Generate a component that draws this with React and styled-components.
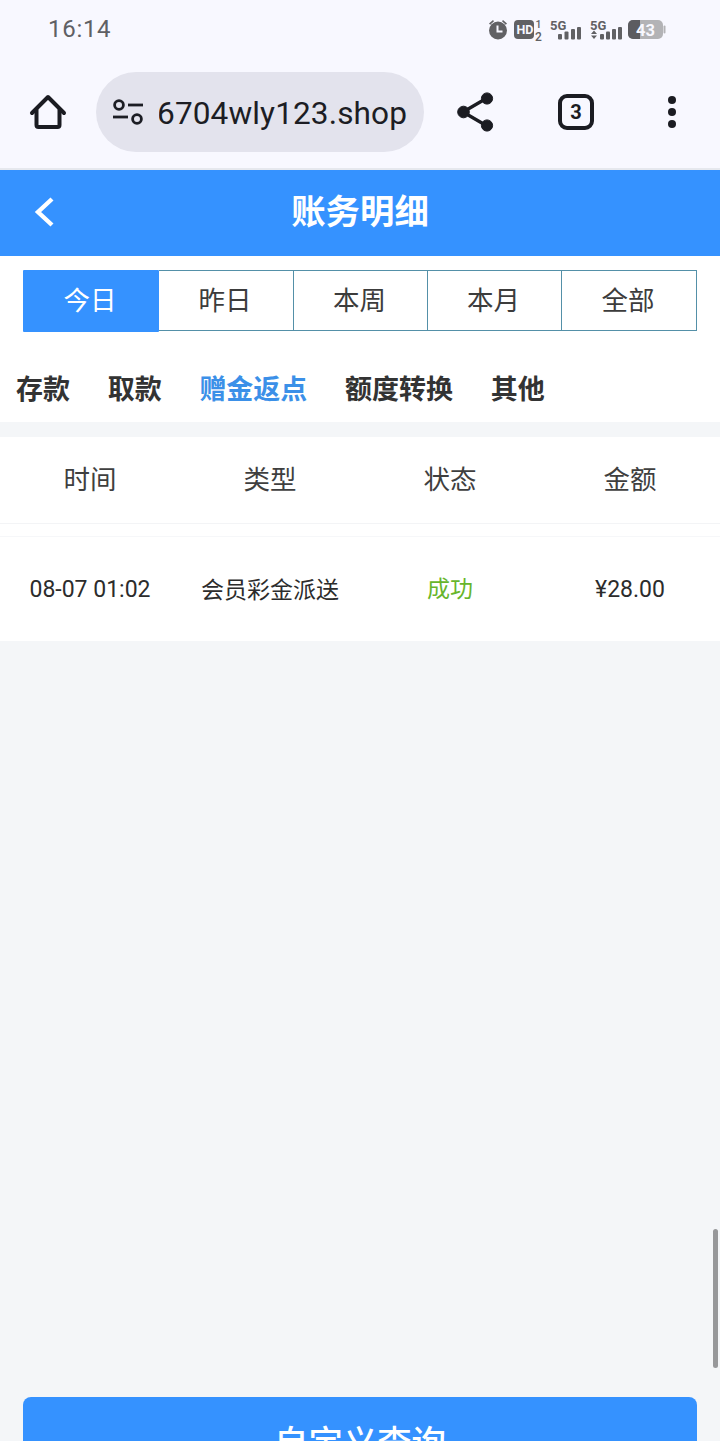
import React from 'react';
import styled, { createGlobalStyle } from 'styled-components';

const Global = createGlobalStyle`
    html, body {
        margin: 0;
        padding: 0;
        height: 100%;
        overflow: hidden;
        background: #f4f6f8;
    }
    * {
        box-sizing: border-box;
    }
`;

const cjk = `Roboto, "Noto Sans CJK SC", sans-serif`;

const Page = styled.div`
    position: relative;
    width: 720px;
    height: 1441px;
    overflow: hidden;
    font-family: ${cjk};
    background: #f4f6f8;
`;

const StatusBar = styled.div`
    height: 57px;
    background: #f8f8ff;
    display: flex;
    align-items: center;
    justify-content: space-between;
    padding: 0 54px 0 48px;
`;
const Clock = styled.span`
    font-size: 24px;
    letter-spacing: 0.7px;
    color: #5f6064;
`;
const StatusIcons = styled.div`
    display: flex;
    align-items: center;
    margin-top: 2px;
`;

const BrowserBar = styled.div`
    height: 113px;
    background: #f8f8ff;
    border-bottom: 2px solid #e6e8ee;
    display: flex;
    align-items: flex-start;
    padding: 15px 0 0 28px;
`;
const IconSlot = styled.div`
    flex: none;
    width: ${(p) => p.$w}px;
    height: 80px;
    margin-left: ${(p) => p.$ml || 0}px;
    display: flex;
    align-items: center;
    justify-content: center;
`;
const UrlPill = styled.div`
    flex: none;
    width: 328px;
    height: 80px;
    margin-left: 28px;
    padding: 0 17px 0 16px;
    border-radius: 40px;
    background: #e3e3ed;
    display: flex;
    align-items: center;
`;
const UrlClip = styled.div`
    flex: 1;
    margin-left: 15px;
    padding-top: 2px;
    overflow: hidden;
    display: flex;
    justify-content: flex-end;
    white-space: nowrap;
    font-size: 31.6px;
    letter-spacing: 0.1px;
    color: #1c1d24;
`;

const Header = styled.header`
    position: relative;
    height: 86px;
    padding-bottom: 8px;
    background: #3592ff;
    display: flex;
    align-items: center;
    justify-content: center;
    color: #fff;
    font-size: 34.4px;
    font-weight: 700;
`;
const BackButton = styled.div`
    position: absolute;
    left: 33px;
    top: 26px;
    display: flex;
`;

const TabsPanel = styled.div`
    background: #fff;
    padding: 14px 23px 0;
`;
const Tabs = styled.div`
    display: grid;
    grid-template-columns: 136px 135px 134px 134px 135px;
    height: 61px;
`;
const Tab = styled.div`
    display: flex;
    align-items: center;
    justify-content: center;
    padding: 0 2px 5px 0;
    font-size: 26.5px;
    color: ${(p) => (p.$active ? '#fff' : '#3c3c3c')};
    background: ${(p) => (p.$active ? '#3592ff' : '#fff')};
    border-style: solid;
    border-color: ${(p) => (p.$active ? '#3592ff' : '#5490a8')};
    border-width: ${(p) => (p.$active ? '0' : '1px 1px 1px 0')};
    height: ${(p) => (p.$active ? '62px' : '61px')};
    border-radius: ${(p) => (p.$active ? '1px' : '0')};
`;

const SubTabs = styled.div`
    display: flex;
    gap: 37.7px;
    height: 91px;
    padding: 21px 0 0 16px;
    align-items: center;
    background: #fff;
`;
const SubTab = styled.span`
    font-size: 27px;
    font-weight: 700;
    color: ${(p) => (p.$active ? '#3b90e8' : '#333')};
`;

const HeadRow = styled.div`
    margin-top: 15px;
    height: 87px;
    padding-bottom: 6px;
    background: #fff;
    border-bottom: 1px solid #f3f4f6;
    display: grid;
    grid-template-columns: repeat(4, 180px);
    align-items: center;
    justify-items: center;
    font-size: 26.5px;
    color: #3f3f3f;
`;
const Spacer = styled.div`
    height: 13px;
    background: #fff;
    border-bottom: 1px solid #f6f7f9;
`;
const DataRow = styled.div`
    height: 104px;
    background: #fff;
    display: grid;
    grid-template-columns: repeat(4, 180px);
    align-items: center;
    justify-items: center;
    font-size: 23px;
    color: #2c2c2c;
`;
const CjkCell = styled.span`
    margin-bottom: ${(p) => (p.$status ? 4 : 2)}px;
    color: ${(p) => (p.$status ? '#67b52b' : 'inherit')};
`;

const Footer = styled.div`
    margin-top: 756px;
    padding: 0 23px;
`;
const QueryButton = styled.button`
    display: flex;
    align-items: center;
    justify-content: center;
    width: 100%;
    height: 88px;
    padding: 0 0 2px;
    border: none;
    border-radius: 8px;
    background: #3592ff;
    color: #fff;
    font-family: ${cjk};
    font-size: 34.4px;
    font-weight: 500;
`;

const ScrollThumb = styled.div`
    position: absolute;
    right: 2px;
    top: 1229px;
    width: 5px;
    height: 139px;
    border-radius: 3px;
    background: #97989a;
`;

const HomeIcon = () => (
    <svg width="38" height="38" viewBox="0 0 38 38" fill="none" stroke="#1b1c22" strokeWidth="4" strokeLinejoin="round" strokeLinecap="round">
        <path d="M3 20 19 4l16 16" />
        <path d="M7.500 17v15a2 2 0 0 0 2 2h19a2 2 0 0 0 2-2V17" />
    </svg>
);

const TuneIcon = () => (
    <svg width="32" height="26" viewBox="0 0 32 26" fill="none" stroke="#1c1d24" strokeWidth="2.8">
        <circle cx="7" cy="6" r="4.4" />
        <path d="M16 6h15" />
        <circle cx="25" cy="20" r="4.4" />
        <path d="M1 18h15" />
    </svg>
);

const ShareIcon = () => (
    <svg width="38" height="40" viewBox="0 0 38 40" fill="#1b1c22" stroke="#1b1c22">
        <path d="M30 6 6 20l24 14" fill="none" strokeWidth="3.4" />
        <circle cx="30" cy="6.5" r="5.6" />
        <circle cx="6.5" cy="20" r="5.8" />
        <circle cx="30" cy="33.5" r="5.6" />
    </svg>
);

const TabCount = styled.div`
    width: 36px;
    height: 36px;
    border: 4px solid #1b1c22;
    border-radius: 9px;
    display: flex;
    align-items: center;
    justify-content: center;
    font-size: 20px;
    font-weight: 700;
    color: #1b1c22;
`;

const MoreIcon = () => (
    <svg width="10" height="34" viewBox="0 0 10 34" fill="#1b1c22">
        <circle cx="5" cy="5" r="4" />
        <circle cx="5" cy="17" r="4" />
        <circle cx="5" cy="29" r="4" />
    </svg>
);

const BackIcon = () => (
    <svg width="22" height="32" viewBox="0 0 22 32" fill="none" stroke="#fff" strokeWidth="4.4">
        <path d="M19 3 5 16l14 13" />
    </svg>
);

const StatusSvg = () => (
    <svg width="178" height="24" viewBox="0 0 178 24" fontFamily="Roboto, sans-serif" fontWeight="700">
        <g fill="#616164">
            <circle cx="10" cy="12.500" r="9" />
            <path d="M1 5.500 5 2 6 3.300 2.200 6.700zM19 5.500 15 2 14 3.300l3.800 3.400z" />
            <rect x="26" y="2" width="20" height="19" rx="4" />
            <rect x="70" y="16" width="4" height="5.500" rx="1" />
            <rect x="76.500" y="13.500" width="4" height="8" rx="1" />
            <rect x="83" y="11" width="4" height="10.500" rx="1" />
            <rect x="89" y="9" width="4" height="12.500" rx="1" />
            <rect x="112" y="16" width="4" height="5.500" rx="1" />
            <rect x="118" y="13.500" width="4" height="8" rx="1" />
            <rect x="124" y="11" width="4" height="10.500" rx="1" />
            <rect x="130" y="9" width="4" height="12.500" rx="1" />
            <path d="M106 12.500l3 3.500h-6zM103 17.500h6l-3 3.500z" />
            <text x="47.500" y="10" fontSize="10.500" fontWeight="500">1</text>
            <text x="47" y="22.500" fontSize="12" fontWeight="500">2</text>
            <text x="62" y="12" fontSize="13">5G</text>
            <text x="102" y="12" fontSize="13">5G</text>
        </g>
        <path d="M9.500 7.500v6h5" fill="none" stroke="#f8f8ff" strokeWidth="2" />
        <text x="28.500" y="16" fontSize="12.500" fill="#f8f8ff">HD</text>
        <rect x="140" y="2" width="35" height="19" rx="5" fill="#b3b3b6" />
        <path d="M145 2h7v19h-7a5 5 0 0 1-5-5V7a5 5 0 0 1 5-5z" fill="#5c5c60" />
        <rect x="175.500" y="7.500" width="2" height="8" rx="1" fill="#b3b3b6" />
        <text x="157.500" y="17.500" fontSize="16.500" fill="#f8f8ff" textAnchor="middle">43</text>
    </svg>
);

const timeTabs = ['今日', '昨日', '本周', '本月', '全部'];
const typeTabs = ['存款', '取款', '赠金返点', '额度转换', '其他'];
const columns = ['时间', '类型', '状态', '金额'];

export default function App() {
    return (
        <Page>
            <Global />
            <StatusBar>
                <Clock>16:14</Clock>
                <StatusIcons>
                    <StatusSvg />
                </StatusIcons>
            </StatusBar>
            <BrowserBar>
                <IconSlot $w={40}>
                    <HomeIcon />
                </IconSlot>
                <UrlPill>
                    <TuneIcon />
                    <UrlClip>6704wly123.shop</UrlClip>
                </UrlPill>
                <IconSlot $w={40} $ml={32}>
                    <ShareIcon />
                </IconSlot>
                <IconSlot $w={40} $ml={60}>
                    <TabCount>3</TabCount>
                </IconSlot>
                <IconSlot $w={40} $ml={56}>
                    <MoreIcon />
                </IconSlot>
            </BrowserBar>
            <Header>
                <BackButton>
                    <BackIcon />
                </BackButton>
                账务明细
            </Header>
            <TabsPanel>
                <Tabs>
                    {timeTabs.map((t, i) => (
                        <Tab key={t} $active={i === 0}>{t}</Tab>
                    ))}
                </Tabs>
            </TabsPanel>
            <SubTabs>
                {typeTabs.map((t) => (
                    <SubTab key={t} $active={t === '赠金返点'}>{t}</SubTab>
                ))}
            </SubTabs>
            <HeadRow>
                {columns.map((c) => (
                    <span key={c}>{c}</span>
                ))}
            </HeadRow>
            <Spacer />
            <DataRow>
                <span>08-07 01:02</span>
                <CjkCell>会员彩金派送</CjkCell>
                <CjkCell $status>成功</CjkCell>
                <span>¥28.00</span>
            </DataRow>
            <Footer>
                <QueryButton>自定义查询</QueryButton>
            </Footer>
            <ScrollThumb />
        </Page>
    );
}
